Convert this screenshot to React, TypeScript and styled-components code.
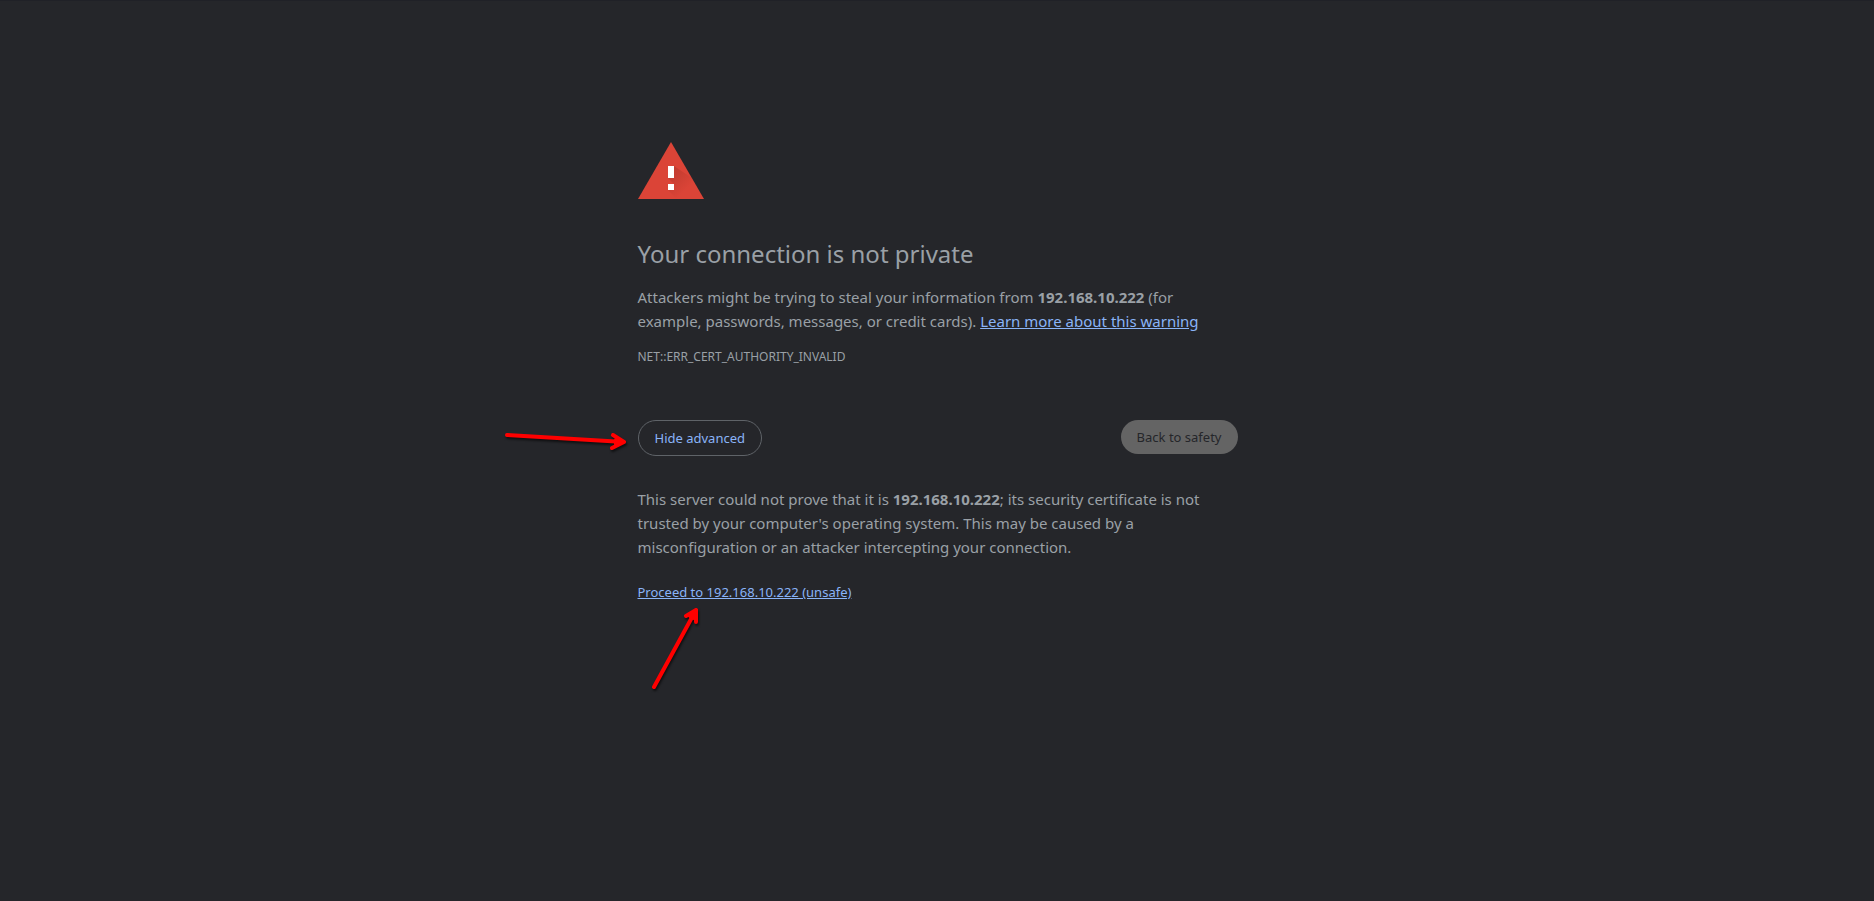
import React from "react";
import styled, { createGlobalStyle } from "styled-components";

const GlobalStyle = createGlobalStyle`
  body {
    box-sizing: border-box;
    min-height: 100vh;
    margin: 0;
    border-top: 1px solid #202127;
    background: #25262a;
    color: #9aa0a6;
    font: 15px/24px "Noto Sans", sans-serif;
  }
`;

const Page = styled.main`
  position: relative;
  box-sizing: border-box;
  width: 100%;
  max-width: 601px;
  min-height: calc(100vh - 1px);
  margin: 0 auto;
  padding: 125px 0 0 1px;
`;

const WarningIcon = styled.svg`
  display: block;
  width: 72px;
  height: 72px;
  margin-bottom: 40px;
  overflow: visible;
`;

const Title = styled.h1`
  margin: 0 0 15px;
  font-size: 24px;
  font-weight: 400;
  line-height: 32px;
`;

const Text = styled.p`
  margin: 0;
`;

const Code = styled.p`
  margin: 13px 0 0;
  font-size: 12px;
  line-height: 22px;
`;

const Link = styled.a<{ $small?: boolean }>`
  color: #8ab4f8;
  font-size: ${(p) => (p.$small ? "13px" : "inherit")};
`;

const Actions = styled.div`
  display: flex;
  justify-content: space-between;
  align-items: flex-start;
  margin: 52px 0 31px;
`;

const Button = styled.button<{ $primary?: boolean }>`
  padding: 8px 16px;
  border: ${(p) => (p.$primary ? "0" : "1px solid #5f6368")};
  border-radius: 20px;
  background: ${(p) => (p.$primary ? "#646464" : "transparent")};
  color: ${(p) => (p.$primary ? "#25262a" : "#8ab4f8")};
  font: 13px/18px "Noto Sans", sans-serif;
`;

const Proceed = styled.p`
  margin: 20px 0 0;
`;

const Arrow = styled.svg<{ $left: number; $top: number }>`
  position: absolute;
  left: ${(p) => p.$left}px;
  top: ${(p) => p.$top}px;
  fill: none;
  stroke: #f00;
  stroke-width: 4;
  stroke-linecap: round;
  stroke-linejoin: round;
  overflow: visible;
  filter: drop-shadow(1px 2px 1px rgba(0, 0, 0, 0.6));
  pointer-events: none;
`;

export default function App() {
  return (
    <>
      <GlobalStyle />
      <Page>
        <WarningIcon viewBox="0 0 72 72" aria-hidden="true">
          <defs>
            <linearGradient id="shade" gradientUnits="userSpaceOnUse" x1="32" y1="44" x2="50" y2="62">
              <stop offset="0" stopColor="#8c2a20" stopOpacity="0.35" />
              <stop offset="1" stopColor="#8c2a20" stopOpacity="0" />
            </linearGradient>
          </defs>
          <path d="M0 73 33 16l33 57z" fill="#db4437" />
          <path d="M36 40 54 52 66 73H39L30 64l6-6-6-6z" fill="url(#shade)" />
          <path d="M30 40h6v12h-6zm0 18h6v6h-6z" fill="#fff" />
        </WarningIcon>
        <Title>Your connection is not private</Title>
        <Text>
          Attackers might be trying to steal your information from <strong>192.168.10.222</strong> (for example,
          passwords, messages, or credit cards). <Link href="#learn">Learn more about this warning</Link>
        </Text>
        <Code>NET::ERR_CERT_AUTHORITY_INVALID</Code>
        <Actions>
          <Button type="button">Hide advanced</Button>
          <Button type="button" $primary>Back to safety</Button>
        </Actions>
        <Text>
          This server could not prove that it is <strong>192.168.10.222</strong>; its security certificate is not
          trusted by your computer's operating system. This may be caused by a misconfiguration or an attacker
          intercepting your connection.
        </Text>
        <Proceed>
          <Link href="#proceed" $small>Proceed to 192.168.10.222 (unsafe)</Link>
        </Proceed>
        <Arrow $left={-132} $top={433} width="120" height="16" aria-hidden="true">
          <path d="M2 1 119 8M108 1l11 7-12 6" />
          <path d="m111 6 4 2-4 2z" fill="#f00" />
        </Arrow>
        <Arrow $left={15} $top={607} width="46" height="80" aria-hidden="true">
          <path d="M2 79 44 2M34 8l10-6v12" />
          <path d="m38 8 4-3v5z" fill="#f00" />
        </Arrow>
      </Page>
    </>
  );
}
